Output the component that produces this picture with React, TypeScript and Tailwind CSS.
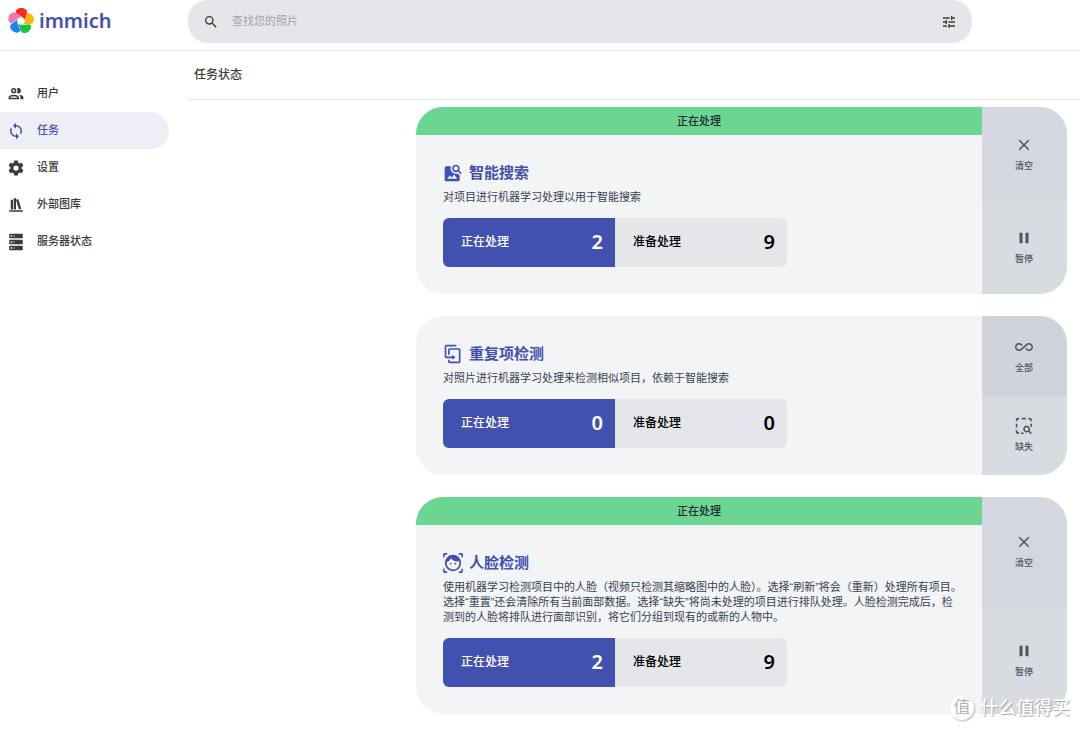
import type { ReactNode } from 'react';

const icons = {
  magnify:
    'M9.5,3A6.5,6.5 0 0,1 16,9.5C16,11.11 15.41,12.59 14.44,13.73L14.71,14H15.5L20.5,19L19,20.5L14,15.5V14.71L13.73,14.44C12.59,15.41 11.11,16 9.5,16A6.5,6.5 0 0,1 3,9.5A6.5,6.5 0 0,1 9.5,3M9.5,5C7,5 5,7 5,9.5C5,12 7,14 9.5,14C12,14 14,12 14,9.5C14,7 12,5 9.5,5Z',
  tune: 'M3,17V19H9V17H3M3,5V7H13V5H3M13,21V19H21V17H13V15H11V21H13M7,9V11H3V13H7V15H9V9H7M21,13V11H11V13H21M15,9H17V7H21V5H17V3H15V9Z',
  users:
    'M13.07 10.41A5 5 0 0 0 13.07 4.59A3.39 3.39 0 0 1 15 4A3.5 3.5 0 0 1 15 11A3.39 3.39 0 0 1 13.07 10.41M5.5 7.5A3.5 3.5 0 1 1 9 11A3.5 3.5 0 0 1 5.5 7.5M7.5 7.5A1.5 1.5 0 1 0 9 6A1.5 1.5 0 0 0 7.5 7.5M16 17V19H2V17S2 13 9 13 16 17 16 17M14 17C13.86 16.22 12.67 15 9 15S4.07 16.31 4 17M15.95 13A5.32 5.32 0 0 1 18 17V19H22V17S22 13.37 15.94 13Z',
  sync: 'M12,18A6,6 0 0,1 6,12C6,11 6.25,10.03 6.7,9.2L5.24,7.74C4.46,8.97 4,10.43 4,12A8,8 0 0,0 12,20V23L16,19L12,15M12,4V1L8,5L12,9V6A6,6 0 0,1 18,12C18,13 17.75,13.97 17.3,14.8L18.76,16.26C19.54,15.03 20,13.57 20,12A8,8 0 0,0 12,4Z',
  cog: 'M12,15.5A3.5,3.5 0 0,1 8.5,12A3.5,3.5 0 0,1 12,8.5A3.5,3.5 0 0,1 15.5,12A3.5,3.5 0 0,1 12,15.5M19.43,12.97C19.47,12.65 19.5,12.33 19.5,12C19.5,11.67 19.47,11.34 19.43,11L21.54,9.37C21.73,9.22 21.78,8.95 21.66,8.73L19.66,5.27C19.54,5.05 19.27,4.96 19.05,5.05L16.56,6.05C16.04,5.66 15.5,5.32 14.87,5.07L14.5,2.42C14.46,2.18 14.25,2 14,2H10C9.75,2 9.54,2.18 9.5,2.42L9.13,5.07C8.5,5.32 7.96,5.66 7.44,6.05L4.95,5.05C4.73,4.96 4.46,5.05 4.34,5.27L2.34,8.73C2.21,8.95 2.27,9.22 2.46,9.37L4.57,11C4.53,11.34 4.5,11.67 4.5,12C4.5,12.33 4.53,12.65 4.57,12.97L2.46,14.63C2.27,14.78 2.21,15.05 2.34,15.27L4.34,18.73C4.46,18.95 4.73,19.03 4.95,18.95L7.44,17.94C7.96,18.34 8.5,18.68 9.13,18.93L9.5,21.58C9.54,21.82 9.75,22 10,22H14C14.25,22 14.46,21.82 14.5,21.58L14.87,18.93C15.5,18.67 16.04,18.34 16.56,17.94L19.05,18.95C19.27,19.03 19.54,18.95 19.66,18.73L21.66,15.27C21.78,15.05 21.73,14.78 21.54,14.63L19.43,12.97Z',
  bookshelf: 'M9 3V18H12V3H9M12 5L16 18L19 17L15 4L12 5M5 5V18H8V5H5M3 19V21H21V19H3Z',
  server:
    'M4,1H20A1,1 0 0,1 21,2V6A1,1 0 0,1 20,7H4A1,1 0 0,1 3,6V2A1,1 0 0,1 4,1M4,9H20A1,1 0 0,1 21,10V14A1,1 0 0,1 20,15H4A1,1 0 0,1 3,14V10A1,1 0 0,1 4,9M4,17H20A1,1 0 0,1 21,18V22A1,1 0 0,1 20,23H4A1,1 0 0,1 3,22V18A1,1 0 0,1 4,17M9,5H10V3H9V5M9,13H10V11H9V13M9,21H10V19H9V21M5,3V5H7V3H5M5,11V13H7V11H5M5,19V21H7V19H5Z',
  close:
    'M19,6.41L17.59,5L12,10.59L6.41,5L5,6.41L10.59,12L5,17.59L6.41,19L12,13.41L17.59,19L19,17.59L13.41,12L19,6.41Z',
  pause: 'M14,19H18V5H14M6,19H10V5H6V19Z',
  infinity:
    'M18.6,6.62C17.16,6.62 15.8,7.18 14.83,8.15L7.8,14.39C7.16,15.03 6.31,15.38 5.4,15.38C3.53,15.38 2,13.87 2,12C2,10.13 3.53,8.62 5.4,8.62C6.31,8.62 7.16,8.97 7.84,9.65L8.97,10.65L10.5,9.31L9.22,8.2C8.2,7.18 6.84,6.62 5.4,6.62C2.42,6.62 0,9.04 0,12C0,14.96 2.42,17.38 5.4,17.38C6.84,17.38 8.2,16.82 9.17,15.85L16.2,9.61C16.84,8.97 17.69,8.62 18.6,8.62C20.47,8.62 22,10.13 22,12C22,13.87 20.47,15.38 18.6,15.38C17.7,15.38 16.84,15.03 16.16,14.35L15,13.34L13.5,14.68L14.78,15.8C15.8,16.81 17.15,17.37 18.6,17.37C21.58,17.37 24,14.96 24,12C24,9 21.58,6.62 18.6,6.62Z',
  selectionSearch:
    'M1,4A3,3 0 0,1 4,1H5.5V3.2H4.2A1,1 0 0,0 3.2,4.2V5.5H1V4M9,1H14.5V3.2H9V1M18,1H19.5A3,3 0 0,1 22.5,4V5.5H20.3V4.2A1,1 0 0,0 19.3,3.2H18V1M1,9H3.2V14H1V9M1,17.5H3.2V19.3A1,1 0 0,0 4.2,20.3H5.5V22.5H4A3,3 0 0,1 1,19.5V17.5M20.3,9H22.5V14L20.3,12V9M8.5,20.3H10.3L12.5,22.5H8.5V20.3M15.5,11.5A4.5,4.5 0 0,1 19.3,18.4L22.6,21.5L21,23.1L17.9,19.8A4.5,4.5 0 1,1 15.5,11.5M15.5,13.5A2.5,2.5 0 0,0 15.5,18.5A2.5,2.5 0 0,0 15.5,13.5Z',
  imageSearch:
    'M15.5,2A4.5,4.5 0 0,1 19.31,8.91L22.41,12L21,13.41L17.86,10.31A4.5,4.5 0 1,1 15.5,2M15.5,4A2.5,2.5 0 1,0 15.5,9A2.5,2.5 0 0,0 15.5,4M9.5,4A6.5,6.5 0 0,0 15.5,13C16.3,13 17,12.9 17.6,12.6L20,15V20A2,2 0 0,1 18,22H4A2,2 0 0,1 2,20V6A2,2 0 0,1 4,4H9.5M5,19H17L13.3,13.8L10.3,17.6L8.2,15.1L5,19Z',
  duplicate:
    'M11,17H4A2,2 0 0,1 2,15V3A2,2 0 0,1 4,1H16V3H4V15H11V13L15,16L11,19V17M19,21V7H8V13H6V7A2,2 0 0,1 8,5H19A2,2 0 0,1 21,7V21A2,2 0 0,1 19,23H8A2,2 0 0,1 6,21V19H8V21H19Z',
  face: 'M9.2,11.7A1.1,1.1 0 1,0 9.2,13.9A1.1,1.1 0 0,0 9.2,11.7M14.8,11.7A1.1,1.1 0 1,0 14.8,13.9A1.1,1.1 0 0,0 14.8,11.7M12,2.2A9.8,9.8 0 1,0 12,21.8A9.8,9.8 0 0,0 12,2.2M12,19.8A7.8,7.8 0 0,1 4.3,11.2C6.5,10.2 8.5,8.5 9.5,6.3C11.2,8.6 13.9,10.1 17,10.1C17.9,10.1 18.7,10 19.5,9.9A7.8,7.8 0 0,1 12,19.8M0,2A2,2 0 0,1 2,0H5V2H2V5H0V2M19,0H22A2,2 0 0,1 24,2V5H22V2H19V0M0,19H2V22H5V24H2A2,2 0 0,1 0,22V19M22,19H24V22A2,2 0 0,1 22,24H19V22H22V19Z',
};

type IconName = keyof typeof icons;

function Icon({ name, className }: { name: IconName; className: string }) {
  return (
    <svg viewBox="0 0 24 24" className={className} fill="currentColor" fillRule="evenodd" aria-hidden="true">
      <path d={icons[name]} />
    </svg>
  );
}

const petals = ['#fa2921', '#ffb400', '#18c249', '#1e83f7', '#ed79b5'];

function Logo() {
  return (
    <a href="#" className="flex items-center gap-[5px] text-[#4250af]">
      <svg viewBox="-13 -13 26 26" className="size-[26px]" aria-hidden="true">
        {petals.map((color, i) => (
          <path
            key={color}
            d="M-5.4,-8.2C-5.2,-11.6 -2.6,-13 0.4,-13C3.6,-13 6,-11.4 6,-8.7C6,-6.2 4.6,-4.2 3.9,-0.9C1.8,-4.4 -1.4,-5.2 -5.4,-8.2Z"
            fill={color}
            transform={`rotate(${i * 72})`}
          />
        ))}
      </svg>
      <span className="font-['Noto_Sans'] text-xl leading-6 font-semibold">immich</span>
    </a>
  );
}

const navItems: { icon: IconName; label: string; active?: boolean }[] = [
  { icon: 'users', label: '用户' },
  { icon: 'sync', label: '任务', active: true },
  { icon: 'cog', label: '设置' },
  { icon: 'bookshelf', label: '外部图库' },
  { icon: 'server', label: '服务器状态' },
];

type Action = { icon: IconName; label: string; tone: string };

function ActionButton({ icon, label, tone }: Action) {
  return (
    <button className={`flex flex-1 flex-col items-center justify-center gap-1.5 pr-px text-[#4b5563] ${tone}`}>
      <Icon name={icon} className="size-[18px]" />
      <span className="text-[9px] leading-3 font-medium">{label}</span>
    </button>
  );
}

type JobProps = {
  icon: IconName;
  title: string;
  running?: boolean;
  active: number;
  waiting: number;
  actions: Action[];
  children: ReactNode;
};

function JobCard({ icon, title, running, active, waiting, actions, children }: JobProps) {
  return (
    <section className="flex overflow-hidden rounded-[27px] bg-[#f3f4f6]">
      <div className="min-w-0 flex-1">
        {running && (
          <div className="bg-[#6bd592] text-center text-[11px] leading-7 font-medium text-[#1f2937]">正在处理</div>
        )}
        <div className="py-[27px] pl-[27px]">
          <h2 className="flex h-[22px] items-center gap-1.5 text-[15px] font-bold text-[#4250af]">
            <Icon name={icon} className="size-5" />
            {title}
          </h2>
          <p className="mt-1.5 text-[11px] leading-[15px] whitespace-nowrap text-[#374151]">{children}</p>
          <dl className="mt-[13px] grid h-[49px] w-[344px] grid-cols-2 overflow-hidden rounded-md text-xs font-medium">
            <div className="flex items-center justify-between bg-[#4250af] pr-3 pb-0.5 pl-[18px] text-white">
              <dt>正在处理</dt>
              <dd className="font-['Noto_Sans'] text-xl font-semibold">{active}</dd>
            </div>
            <div className="flex items-center justify-between bg-[#e5e6ea] pr-3 pb-0.5 pl-[18px] text-black">
              <dt>准备处理</dt>
              <dd className="font-['Noto_Sans'] text-xl font-semibold">{waiting}</dd>
            </div>
          </dl>
        </div>
      </div>
      <div className="flex w-[85px] flex-col">
        {actions.map((action) => (
          <ActionButton key={action.label} {...action} />
        ))}
      </div>
    </section>
  );
}

const runningActions: Action[] = [
  { icon: 'close', label: '清空', tone: 'bg-[#d4d7df]' },
  { icon: 'pause', label: '暂停', tone: 'bg-[#d8dbe0]' },
];

const idleActions: Action[] = [
  { icon: 'infinity', label: '全部', tone: 'bg-[#d0d3dc]' },
  { icon: 'selectionSearch', label: '缺失', tone: 'bg-[#d8dbe0]' },
];

export default function App() {
  return (
    <div className="relative flex min-h-screen flex-col bg-white font-['Liberation_Sans','Noto_Sans_CJK_SC',sans-serif] text-[#3a3a3a]">
      <header className="flex h-[51px] border-b border-[#e2e4e8] pr-[108px]">
        <div className="flex h-[42px] w-[188px] shrink-0 items-center pl-2">
          <Logo />
        </div>
        <form role="search" className="flex h-[43px] flex-1 items-center rounded-[20px] bg-[#e5e6ea] px-[15px]">
          <button type="button" aria-label="搜索">
            <Icon name="magnify" className="size-4" />
          </button>
          <input
            type="search"
            aria-label="查找您的照片"
            placeholder="查找您的照片"
            className="ml-[13px] min-w-0 flex-1 bg-transparent text-[11px] outline-none placeholder:text-[#9ca3af]"
          />
          <button type="button" aria-label="筛选">
            <Icon name="tune" className="size-4" />
          </button>
        </form>
      </header>

      <div className="flex flex-1">
        <nav className="w-[188px] shrink-0 pt-6 pr-[19px]" aria-label="管理">
          {navItems.map(({ icon, label, active }) => (
            <a
              key={label}
              href="#"
              aria-current={active ? 'page' : undefined}
              className={`flex h-[37px] items-center gap-3 rounded-r-full pl-[7px] text-[11px] font-medium ${
                active ? 'bg-[#eeeef7] text-[#4250af]' : ''
              }`}
            >
              <Icon name={icon} className="size-[18px]" />
              {label}
            </a>
          ))}
        </nav>

        <main className="min-w-0 flex-1">
          <div className="flex h-[49px] items-center border-b border-[#e2e4e8] pl-1.5">
            <h1 className="text-xs font-medium">任务状态</h1>
          </div>
          <div className="mr-[13px] ml-auto flex max-w-[651px] flex-col gap-[22px] pt-[7px] pb-4">
            <JobCard icon="imageSearch" title="智能搜索" running active={2} waiting={9} actions={runningActions}>
              对项目进行机器学习处理以用于智能搜索
            </JobCard>
            <JobCard icon="duplicate" title="重复项检测" active={0} waiting={0} actions={idleActions}>
              对照片进行机器学习处理来检测相似项目，依赖于智能搜索
            </JobCard>
            <JobCard icon="face" title="人脸检测" running active={2} waiting={9} actions={runningActions}>
              使用机器学习检测项目中的人脸（视频只检测其缩略图中的人脸）。选择“刷新”将会（重新）处理所有项目。
              <br />
              选择“重置”还会清除所有当前面部数据。选择“缺失”将尚未处理的项目进行排队处理。人脸检测完成后，检
              <br />
              测到的人脸将排队进行面部识别，将它们分组到现有的或新的人物中。
            </JobCard>
          </div>
        </main>
      </div>

      <div className="absolute right-2.5 bottom-2.5 flex items-center gap-1.5 text-white">
        <span className="flex size-6 items-center justify-center rounded-full bg-white text-[17px] leading-6 text-[#b4b6bc] shadow-[1px_1px_2px_#b4b6bc]">
          值
        </span>
        <span className="text-lg leading-6 font-medium [text-shadow:1px_1px_1px_#a1a4ab]">什么值得买</span>
      </div>
    </div>
  );
}
